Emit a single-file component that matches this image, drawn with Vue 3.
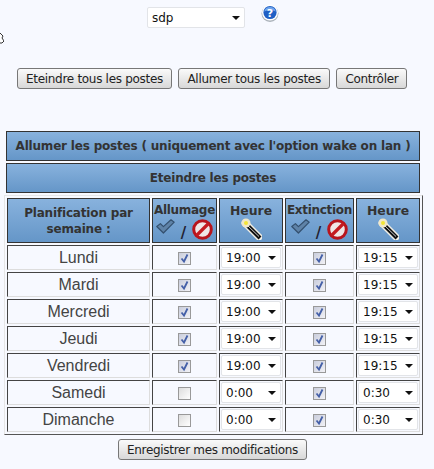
<script setup>
const rows = [
  { day: 'Lundi', on: true, start: '19:00', end: '19:15' },
  { day: 'Mardi', on: true, start: '19:00', end: '19:15' },
  { day: 'Mercredi', on: true, start: '19:00', end: '19:15' },
  { day: 'Jeudi', on: true, start: '19:00', end: '19:15' },
  { day: 'Vendredi', on: true, start: '19:00', end: '19:15' },
  { day: 'Samedi', on: false, start: '0:00', end: '0:30' },
  { day: 'Dimanche', on: false, start: '0:00', end: '0:30' },
]
</script>

<template>
  <div class="page">
    <svg class="cursor" width="4" height="12" viewBox="0 0 4 12">
      <path d="M0 1 L3 4 L2 6 L4 9 L2 11 L0 11" fill="#fff" stroke="#333" stroke-width="1" />
    </svg>
    <div class="top">
      <span class="sel sel-main"><span>sdp</span><i class="arrow"></i></span>
      <svg class="help" width="18" height="18" viewBox="0 0 18 18">
        <circle cx="9" cy="9.5" r="8.5" fill="#aab2ba" />
        <circle cx="9" cy="8.5" r="8" fill="#fff" />
        <circle cx="9" cy="8.5" r="6.6" fill="#1f5fc4" />
        <path d="M3.2 7.5 A6 6 0 0 1 14.8 7.5 Q9 5 3.2 7.5Z" fill="#6fa4ec" />
        <text x="9" y="12.5" text-anchor="middle" class="q">?</text>
      </svg>
    </div>
    <div class="actions">
      <button class="btn">Eteindre tous les postes</button>
      <button class="btn">Allumer tous les postes</button>
      <button class="btn">Contrôler</button>
    </div>
    <div class="bar">Allumer les postes ( uniquement avec l'option wake on lan )</div>
    <div class="bar">Eteindre les postes</div>
    <table class="plan">
      <thead>
        <tr>
          <th class="c1">Planification par<br />semaine :</th>
          <th class="c2">
            <div class="hd">Allumage</div>
            <div class="ico">
              <svg class="chk" width="19" height="15" viewBox="0 0 19 15"><path d="M0.8 7.5 L4.4 4.6 L7.4 7.6 L15 0.8 L18.2 3.2 L7.4 14 Z" fill="#5f83a8" stroke="#34506e" stroke-width="1.2" stroke-linejoin="round" /></svg>
              <span class="sl">/</span>
              <svg width="21" height="21" viewBox="0 0 21 21"><circle cx="10.5" cy="10.5" r="8.8" fill="#efe6e6" stroke="#b8141c" stroke-width="3" /><path d="M4.5 16.5 L16.5 4.5" stroke="#c41a20" stroke-width="3.2" /></svg>
            </div>
          </th>
          <th class="c3">
            <div class="hd tall">Heure</div>
            <svg class="wand" width="22" height="22" viewBox="0 0 22 22"><path d="M5 5 L19 19" stroke="#f2efe6" stroke-width="7" stroke-linecap="round" /><path d="M6 6 L20 20" stroke="#111" stroke-width="4" /><path d="M7 7 L19 18.5" stroke="#ccc" stroke-width="1" /><circle cx="6" cy="5" r="4.5" fill="#f0e7c8" /><circle cx="6" cy="5" r="2" fill="#f3e536" /></svg>
          </th>
          <th class="c4">
            <div class="hd">Extinction</div>
            <div class="ico">
              <svg class="chk" width="19" height="15" viewBox="0 0 19 15"><path d="M0.8 7.5 L4.4 4.6 L7.4 7.6 L15 0.8 L18.2 3.2 L7.4 14 Z" fill="#5f83a8" stroke="#34506e" stroke-width="1.2" stroke-linejoin="round" /></svg>
              <span class="sl">/</span>
              <svg width="21" height="21" viewBox="0 0 21 21"><circle cx="10.5" cy="10.5" r="8.8" fill="#efe6e6" stroke="#b8141c" stroke-width="3" /><path d="M4.5 16.5 L16.5 4.5" stroke="#c41a20" stroke-width="3.2" /></svg>
            </div>
          </th>
          <th class="c5">
            <div class="hd tall">Heure</div>
            <svg class="wand" width="22" height="22" viewBox="0 0 22 22"><path d="M5 5 L19 19" stroke="#f2efe6" stroke-width="7" stroke-linecap="round" /><path d="M6 6 L20 20" stroke="#111" stroke-width="4" /><path d="M7 7 L19 18.5" stroke="#ccc" stroke-width="1" /><circle cx="6" cy="5" r="4.5" fill="#f0e7c8" /><circle cx="6" cy="5" r="2" fill="#f3e536" /></svg>
          </th>
        </tr>
      </thead>
      <tbody>
        <tr v-for="r in rows" :key="r.day">
          <td class="day">{{ r.day }}</td>
          <td><span class="box" :class="{ checked: r.on }"><svg v-if="r.on" width="11" height="11" viewBox="0 0 11 11"><path d="M2.5 5.5 L5 8.5 L8.5 1.5" fill="none" stroke="#4560a8" stroke-width="1.8" /></svg></span></td>
          <td class="tsel"><span class="sel"><span>{{ r.start }}</span><i class="arrow"></i></span></td>
          <td><span class="box checked"><svg width="11" height="11" viewBox="0 0 11 11"><path d="M2.5 5.5 L5 8.5 L8.5 1.5" fill="none" stroke="#4560a8" stroke-width="1.8" /></svg></span></td>
          <td class="tsel"><span class="sel"><span>{{ r.end }}</span><i class="arrow"></i></span></td>
        </tr>
      </tbody>
    </table>
    <div class="save"><button class="btn">Enregistrer mes modifications</button></div>
  </div>
</template>

<style>
html, body { margin: 0; background: #f7f9ff; }
</style>

<style scoped>
.page {
  position: relative;
  width: 434px;
  height: 469px;
  overflow: hidden;
  background: #f7f9ff;
  font-family: "DejaVu Sans", sans-serif;
  color: #333;
}
.cursor { position: absolute; left: 0; top: 32px; }
.top { display: flex; height: 68px; padding-left: 147px; box-sizing: border-box; align-items: flex-start; }
.sel {
  position: relative;
  display: inline-flex;
  align-items: center;
  box-sizing: border-box;
  width: 60px;
  height: 22px;
  padding-left: 4px;
  padding-top: 1px;
  background: #fff;
  border: 1px solid #e2e4e8;
  border-radius: 2px;
  font-family: "DejaVu Sans", sans-serif;
  font-size: 12px;
  color: #111;
}
.sel-main { width: 98px; height: 21px; margin-top: 7px; }
.arrow {
  position: absolute;
  right: 4px;
  top: 50%;
  margin-top: -2px;
  border-left: 4px solid transparent;
  border-right: 4px solid transparent;
  border-top: 4px solid #111;
}
.help { margin: 4px 0 0 16px; }
.q { font: bold 11px "DejaVu Sans", sans-serif; fill: #fff; }
.actions { display: flex; gap: 6.5px; padding-left: 17px; height: 63px; align-items: flex-start; }
.btn {
  box-sizing: border-box;
  height: 21px;
  padding: 0 8px;
  border: 1px solid #777;
  border-radius: 3px;
  background: linear-gradient(#fafafa, #d8d8d8);
  font-family: "DejaVu Sans", sans-serif;
  font-size: 12px;
  letter-spacing: -0.3px;
  color: #222;
  white-space: nowrap;
}
.bar {
  box-sizing: border-box;
  width: 414px;
  height: 30px;
  margin: 0 0 2px 6px;
  border: 1px solid #333;
  background: linear-gradient(#88b2dd, #6596c8);
  display: flex;
  align-items: center;
  justify-content: center;
  font-size: 12px;
  letter-spacing: -0.19px;
  font-weight: bold;
  color: #333;
  white-space: nowrap;
}
.plan {
  box-sizing: border-box;
  width: 419px;
  margin: 0 0 0 4px;
  table-layout: fixed;
  border-collapse: separate;
  border-spacing: 2px;
  border: 1px solid;
  border-color: #e6e6e6 #555 #555 #e6e6e6;
}
th {
  box-sizing: border-box;
  height: 45px;
  padding: 0;
  border: 1px solid #333;
  background: linear-gradient(#88b2dd, #6596c8);
  font-size: 12px;
  letter-spacing: -0.17px;
  font-weight: bold;
  color: #333;
  vertical-align: top;
  text-align: center;
}
.c1 { width: 143px; vertical-align: middle; line-height: 16px; }
.c2 { width: 65px; }
.c3 { width: 64px; }
.c4 { width: 69px; }
.c5 { width: 64px; }
.hd { margin-top: 3px; line-height: 16px; white-space: nowrap; letter-spacing: -0.3px; }
.hd.tall { margin-top: 4px; font-size: 12.4px; letter-spacing: 0; }
.ico { display: flex; align-items: flex-end; justify-content: center; gap: 6px; height: 22px; }
.chk { align-self: flex-start; margin-top: 1px; }
.sl { font-size: 15px; line-height: 14px; color: #223; }
.wand { display: block; margin: -1px auto 0; }
td {
  box-sizing: border-box;
  height: 25px;
  padding: 0;
  text-align: center;
  border: 1px solid;
  border-color: #444 #ddd #ddd #444;
}
.day { font-family: "Liberation Sans", sans-serif; font-size: 16px; color: #444; }
.tsel { padding: 1px; }
.tsel .sel { width: 60px; height: 21px; vertical-align: middle; }
.box {
  display: inline-flex;
  align-items: center;
  justify-content: center;
  box-sizing: border-box;
  width: 13px;
  height: 13px;
  vertical-align: middle;
  border: 1px solid #999;
  background: linear-gradient(135deg, #ddd, #fff);
}
.box.checked { background: linear-gradient(135deg, #c9cddc, #f2f2f6); }
.save { display: flex; justify-content: center; padding-top: 4px; width: 425px; }
</style>
